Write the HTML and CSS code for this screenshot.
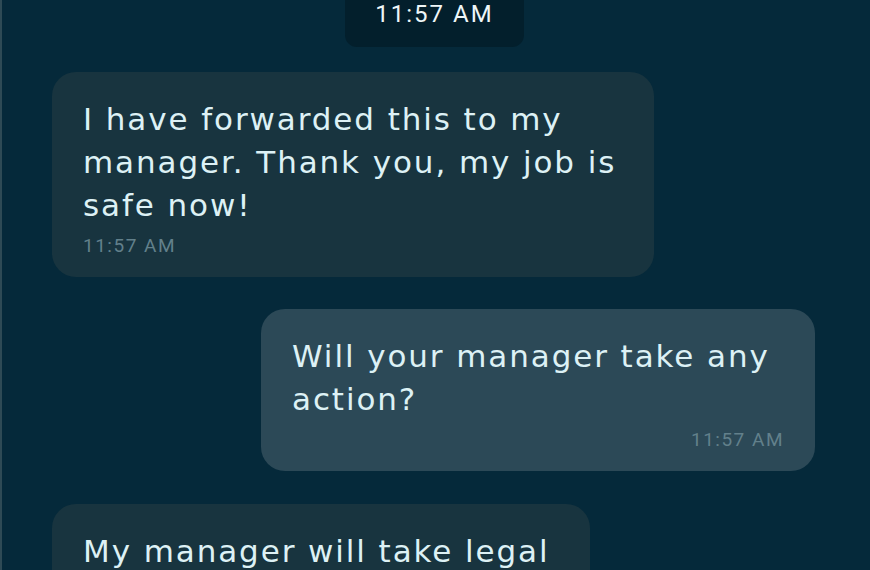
FILE: index.html
```html
<!DOCTYPE html>
<html lang="en">
<head>
    <meta charset="UTF-8">
    <meta name="viewport" content="width=device-width, initial-scale=1.0">
    <title>Chat</title>
    <link rel="stylesheet" href="styles.css">
</head>
<body>
    <div class="chat">
        <!-- marca de hora -->
        <div class="day-time">11:57 AM</div>

        <div class="msg incoming">
            <p class="msg-text">I have forwarded this to my manager. Thank you, my job is safe now!</p>
            <span class="msg-time">11:57 AM</span>
        </div>

        <div class="msg outgoing">
            <p class="msg-text">Will your manager take any action?</p>
            <span class="msg-time">11:57 AM</span>
        </div>

        <div class="msg incoming last">
            <p class="msg-text">My manager will take legal</p>
        </div>
    </div>
</body>
</html>
```

FILE: styles.css
```css
body {
    margin: 0;
    padding: 0;
    background-color: #05293a;
    font-family: "DejaVu Sans", sans-serif;
    overflow: hidden;
}
.chat {
    height: 570px;
    border-left: 2px solid #2e4a55;
    display: flex;
    flex-direction: column;
    padding: 0 55px 0 50px;
    overflow: hidden;
}
.day-time {
    align-self: center;
    margin-top: -20px;
    margin-left: 2px;
    background-color: #031f2c;
    color: #eef6f8;
    font-family: "Roboto", sans-serif;
    font-size: 24px;
    line-height: 28px;
    letter-spacing: 2px;
    padding: 20px 30px 19px;
    border-radius: 12px;
}
.msg {
    display: flex;
    flex-direction: column;
    flex-shrink: 0;
    border-radius: 24px;
    padding: 26px 31px 19px;
    box-sizing: border-box;
}
.msg-text {
    margin: 0;
    color: #ddf1f5;
    font-size: 31px;
    line-height: 43px;
    letter-spacing: 1.9px;
}
.msg-time {
    font-family: "Roboto", sans-serif;
    font-size: 19px;
    line-height: 24px;
    letter-spacing: 1.5px;
    color: #62808b;
    margin-top: 7px;
}
.incoming {
    align-self: flex-start;
    background-color: #18343f;
    width: 602px;
    margin-top: 25px;
}
.outgoing {
    align-self: flex-end;
    background-color: #2c4957;
    width: 554px;
    margin-top: 32px;
}
.outgoing .msg-time {
    align-self: flex-end;
}
.last {
    width: 538px;
    min-height: 120px;
    margin-top: 33px;
}
```
